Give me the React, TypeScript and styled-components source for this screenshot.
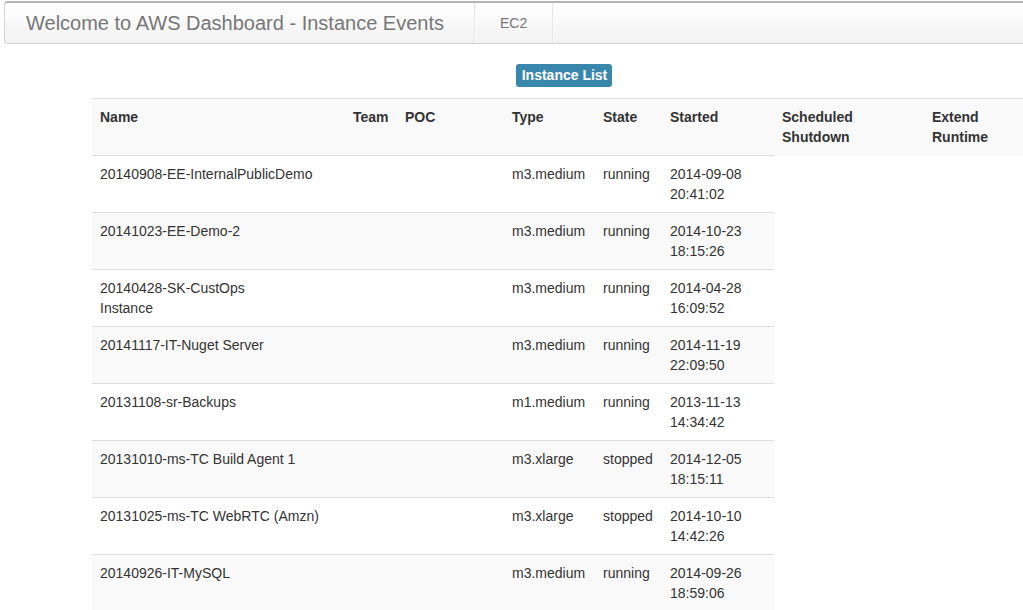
import React from "react";
import styled, { createGlobalStyle } from "styled-components";

const GlobalStyle = createGlobalStyle`
  html, body {
    margin: 0;
    padding: 0;
    overflow: hidden;
    background: #fff;
  }
  body {
    font-family: "Liberation Sans", Arial, Helvetica, sans-serif;
    font-size: 14px;
    line-height: 20px;
    color: #333;
  }
`;

const Page = styled.div`
  width: 1060px;
  padding-top: 1px;
`;

const Navbar = styled.nav`
  display: flex;
  align-items: stretch;
  margin-left: 4px;
  height: 40px;
  border: 1px solid #d4d4d4;
  border-top: 2px solid #b3b3b3;
  border-right: none;
  border-radius: 4px 0 0 4px;
  background: linear-gradient(to bottom, #ffffff 0%, #f2f2f2 100%);
`;

const Brand = styled.div`
  display: flex;
  align-items: center;
  padding: 0 30px 0 21px;
  font-size: 20px;
  color: #777;
  border-right: 1px solid #e6e6e6;
  box-shadow: 1px 0 0 #fff;
`;

const NavItem = styled.div`
  display: flex;
  align-items: center;
  padding: 0 25px 0 25px;
  font-size: 14px;
  color: #777;
  border-right: 1px solid #e6e6e6;
  box-shadow: 1px 0 0 #fff;
`;

const Content = styled.div`
  margin-left: 92px;
  width: 942px;
`;

const ButtonRow = styled.div`
  display: flex;
  justify-content: center;
  padding-top: 20px;
  margin-bottom: 11px;
`;

const Label = styled.span`
  display: inline-block;
  background: #3a87ad;
  color: #fff;
  font-weight: bold;
  font-size: 14px;
  line-height: 23px;
  padding: 0 5px 0 6px;
  margin-left: 2px;
  border-radius: 3px;
`;

const Table = styled.table`
  border-collapse: collapse;
  border-spacing: 0;
  table-layout: fixed;
  width: 942px;
`;

const Th = styled.th`
  text-align: left;
  vertical-align: top;
  padding: 8px;
  font-weight: bold;
  background: #f9f9f9;
  border-top: 1px solid #ddd;
  line-height: 20px;
`;

const Td = styled.td<{ $striped: boolean }>`
  vertical-align: top;
  padding: 8px;
  height: 40px;
  line-height: 20px;
  border-top: 1px solid #ddd;
  background: ${(p) => (p.$striped ? "#f9f9f9" : "#fff")};
`;

type Row = {
  name: React.ReactNode;
  type: string;
  state: string;
  date: string;
  time: string;
};

const rows: Row[] = [
  { name: "20140908-EE-InternalPublicDemo", type: "m3.medium", state: "running", date: "2014-09-08", time: "20:41:02" },
  { name: "20141023-EE-Demo-2", type: "m3.medium", state: "running", date: "2014-10-23", time: "18:15:26" },
  { name: <>20140428-SK-CustOps<br />Instance</>, type: "m3.medium", state: "running", date: "2014-04-28", time: "16:09:52" },
  { name: "20141117-IT-Nuget Server", type: "m3.medium", state: "running", date: "2014-11-19", time: "22:09:50" },
  { name: "20131108-sr-Backups", type: "m1.medium", state: "running", date: "2013-11-13", time: "14:34:42" },
  { name: "20131010-ms-TC Build Agent 1", type: "m3.xlarge", state: "stopped", date: "2014-12-05", time: "18:15:11" },
  { name: "20131025-ms-TC WebRTC (Amzn)", type: "m3.xlarge", state: "stopped", date: "2014-10-10", time: "14:42:26" },
  { name: "20140926-IT-MySQL", type: "m3.medium", state: "running", date: "2014-09-26", time: "18:59:06" },
];

const widths = [253, 52, 107, 91, 67, 112, 150, 110];

export default function App() {
  return (
    <>
      <GlobalStyle />
      <Page>
        <Navbar>
          <Brand>Welcome to AWS Dashboard - Instance Events</Brand>
          <NavItem>EC2</NavItem>
        </Navbar>
        <Content>
          <ButtonRow>
            <Label>Instance List</Label>
          </ButtonRow>
          <Table>
            <colgroup>
              {widths.map((w, i) => (
                <col key={i} style={{ width: w }} />
              ))}
            </colgroup>
            <thead>
              <tr>
                <Th>Name</Th>
                <Th>Team</Th>
                <Th>POC</Th>
                <Th>Type</Th>
                <Th>State</Th>
                <Th>Started</Th>
                <Th>Scheduled Shutdown</Th>
                <Th>Extend Runtime</Th>
              </tr>
            </thead>
            <tbody>
              {rows.map((r, i) => {
                const s = i % 2 === 1;
                return (
                  <tr key={i}>
                    <Td $striped={s}>{r.name}</Td>
                    <Td $striped={s}></Td>
                    <Td $striped={s}></Td>
                    <Td $striped={s}>{r.type}</Td>
                    <Td $striped={s}>{r.state}</Td>
                    <Td $striped={s}>
                      {r.date} {r.time}
                    </Td>
                  </tr>
                );
              })}
            </tbody>
          </Table>
        </Content>
      </Page>
    </>
  );
}
